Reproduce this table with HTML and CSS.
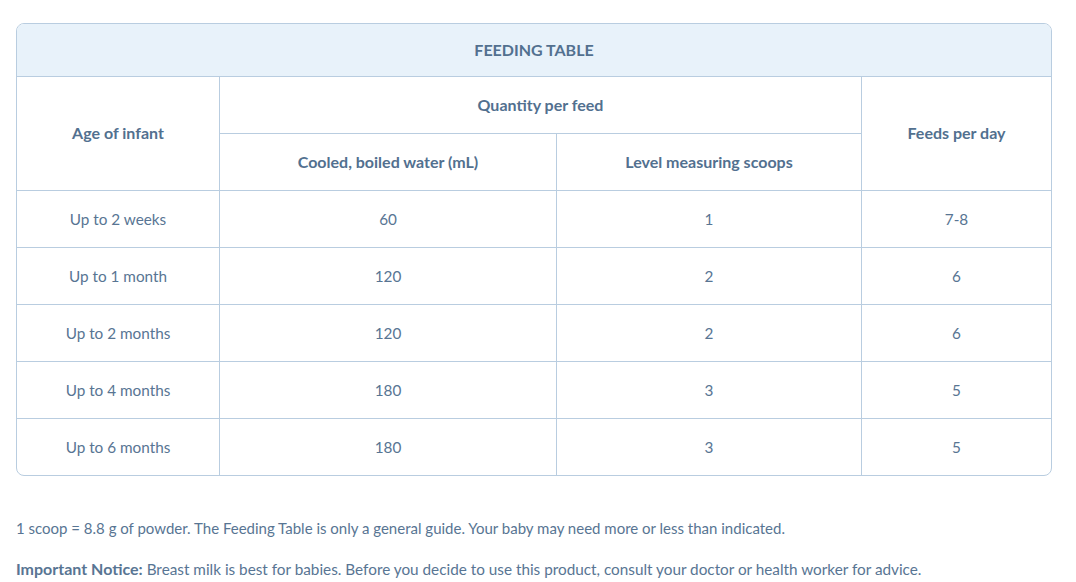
FILE: index.html
```html
<!DOCTYPE html>
<html>
<head>
<meta charset="utf-8">
<link rel="stylesheet" href="styles.css">
</head>
<body>
<div class="table">
  <div class="cell title">FEEDING TABLE</div>
  <div class="cell head age">Age of infant</div>
  <div class="cell head qty">Quantity per feed</div>
  <div class="cell head feeds">Feeds per day</div>
  <div class="cell head">Cooled, boiled water (mL)</div>
  <div class="cell head">Level measuring scoops</div>

  <div class="cell">Up to 2 weeks</div><div class="cell">60</div><div class="cell">1</div><div class="cell last">7-8</div>
  <div class="cell">Up to 1 month</div><div class="cell">120</div><div class="cell">2</div><div class="cell last">6</div>
  <div class="cell">Up to 2 months</div><div class="cell">120</div><div class="cell">2</div><div class="cell last">6</div>
  <div class="cell">Up to 4 months</div><div class="cell">180</div><div class="cell">3</div><div class="cell last">5</div>
  <div class="cell bottom">Up to 6 months</div><div class="cell bottom">180</div><div class="cell bottom">3</div><div class="cell bottom last">5</div>
</div>
<p class="note">1 scoop = 8.8 g of powder. The Feeding Table is only a general guide. Your baby may need more or less than indicated.</p>
<p class="note notice"><strong>Important Notice:</strong> Breast milk is best for babies. Before you decide to use this product, consult your doctor or health worker for advice.</p>
</body>
</html>
```
FILE: styles.css
```css
html, body {
  margin: 0;
  padding: 0;
  background: #ffffff;
}
body {
  padding: 23px 0 0 16px;
  font-family: "Lato", "Open Sans", sans-serif;
  font-size: 15px;
  color: #587593;
}
.table {
  width: 1036px;
  box-sizing: border-box;
  border: 1px solid #b9cde0;
  border-radius: 8px;
  overflow: hidden;
  display: grid;
  grid-template-columns: 203px 337px 305px 189px;
  grid-template-rows: 53px 57px 57px 57px 57px 57px 57px 56px;
  font-size: 15.3px;
}
.cell {
  box-sizing: border-box;
  display: flex;
  align-items: center;
  justify-content: center;
  text-align: center;
  border-right: 1px solid #b9cde0;
  border-bottom: 1px solid #b9cde0;
}
.cell.last { border-right: none; }
.cell.bottom { border-bottom: none; }
.title {
  grid-column: 1 / 5;
  background: #e8f2fa;
  border-right: none;
  font-weight: 700;
  font-size: 16px;
  color: #52708f;
  padding-bottom: 2px;
}
.head {
  font-weight: 700;
  font-size: 16px;
  color: #52708f;
  padding-bottom: 2px;
}
.age { grid-row: 2 / 4; }
.qty { grid-column: 2 / 4; }
.feeds { grid-column: 4 / 5; grid-row: 2 / 4; border-right: none; }
.note {
  margin: 0;
  line-height: 20px;
}
.note:first-of-type { margin-top: 42px; }
.note + .note { margin-top: 21px; }
.note strong { font-weight: 700; font-size: 16px; }
.notice { font-size: 15.3px; }
```
